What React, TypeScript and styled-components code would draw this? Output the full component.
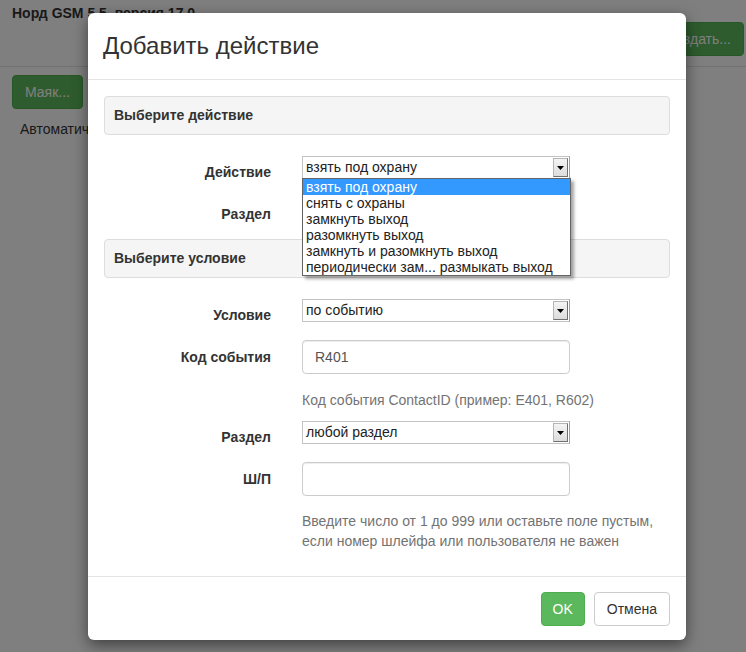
import React from "react";
import styled, { createGlobalStyle } from "styled-components";

const Global = createGlobalStyle`
  html, body {
    margin: 0;
    padding: 0;
    background: #fff;
    font-family: "Liberation Sans", Arial, sans-serif;
    font-size: 14px;
    color: #333;
  }
`;

const Page = styled.div`
  position: relative;
  width: 746px;
  height: 652px;
  overflow: hidden;
`;

const TopBar = styled.div`
  display: flex;
  justify-content: space-between;
  align-items: flex-start;
  padding: 3px 2px 0 12px;
  height: 63px;
  border-bottom: 1px solid #e5e5e5;
`;

const AppTitle = styled.div`
  font-weight: bold;
  font-size: 14px;
  line-height: 20px;
`;

const GreenBtn = styled.div`
  background: #5cb85c;
  border: 1px solid #4cae4c;
  color: #fff;
  border-radius: 4px;
  padding: 6px 12px;
  line-height: 20px;
  font-size: 14px;
`;

const RightBtn = styled(GreenBtn)`
  margin-top: 19px;
  white-space: nowrap;
`;

const PageBody = styled.div`
  padding: 8px 12px;
`;

const BeaconBtn = styled(GreenBtn)`
  display: inline-block;
`;

const AutoText = styled.div`
  padding: 10px 8px 0;
  line-height: 20px;
`;

const Backdrop = styled.div`
  position: absolute;
  inset: 0;
  background: rgba(0, 0, 0, 0.5);
`;

const Modal = styled.div`
  position: absolute;
  top: 13px;
  left: 88px;
  width: 598px;
  background: #fff;
  border-radius: 6px;
  box-shadow: 0 5px 15px rgba(0, 0, 0, 0.5);
`;

const Header = styled.div`
  height: 66px;
  display: flex;
  align-items: center;
  padding: 0 15px;
  border-bottom: 1px solid #e5e5e5;
`;

const Title = styled.h4`
  margin: 0;
  font-size: 24px;
  font-weight: normal;
  line-height: 26px;
  color: #333;
`;

const Body = styled.div`
  padding: 16px 16px 15px;
`;

const Panel = styled.div`
  background: #f5f5f5;
  border: 1px solid #ddd;
  border-radius: 4px;
  padding: 9px 9px 10px;
  font-weight: bold;
  line-height: 18px;
  margin-bottom: 20px;
`;

const Row = styled.div<{ $mb?: number }>`
  display: grid;
  grid-template-columns: 167px 268px;
  column-gap: 31px;
  align-items: start;
  margin-bottom: ${(p) => (p.$mb ?? 15)}px;
`;

const Label = styled.div`
  text-align: right;
  font-weight: bold;
  padding-top: 7px;
  line-height: 20px;
`;

const Spacer = styled.div``;

const SelectBox = styled.div`
  position: relative;
  height: 21px;
  margin-top: 1px;
  border: 1px solid #c3c3c3;
  border-right-color: #a0a0a0;
  display: flex;
  align-items: center;
  background: #fff;
`;

const SelectText = styled.span`
  flex: 1;
  padding-left: 3px;
  line-height: 19px;
  color: #222;
`;

const ArrowBtn = styled.span`
  width: 13px;
  height: 17px;
  margin-right: 1px;
  background: linear-gradient(#f4f4f4, #dcdcdc);
  border: 1px solid #b5b5b5;
  border-right-color: #707070;
  border-bottom-color: #707070;
  display: flex;
  align-items: center;
  justify-content: center;
`;

const DropList = styled.div`
  position: absolute;
  top: 21px;
  left: -1px;
  width: 267px;
  background: #fff;
  border: 1px solid #646464;
  box-shadow: 3px 3px 3px rgba(0, 0, 0, 0.35);
  z-index: 2;
`;

const Option = styled.div<{ $active?: boolean }>`
  height: 16px;
  line-height: 16px;
  padding-left: 3px;
  white-space: nowrap;
  background: ${(p) => (p.$active ? "#3399ff" : "#fff")};
  color: ${(p) => (p.$active ? "#fff" : "#222")};
`;

const Input = styled.div`
  height: 34px;
  box-sizing: border-box;
  border: 1px solid #ccc;
  border-radius: 4px;
  padding: 6px 12px;
  line-height: 20px;
  color: #555;
  box-shadow: inset 0 1px 1px rgba(0, 0, 0, 0.075);
`;

const Help = styled.div<{ $wide?: boolean }>`
  color: #737373;
  line-height: 20px;
  width: ${(p) => (p.$wide ? "380px" : "auto")};
  white-space: ${(p) => (p.$wide ? "normal" : "nowrap")};
  padding-top: ${(p) => (p.$wide ? 0 : 1)}px;
`;

const Footer = styled.div`
  border-top: 1px solid #e5e5e5;
  padding: 15px 16px 14px;
  display: flex;
  justify-content: flex-end;
  gap: 9px;
`;

const OkBtn = styled(GreenBtn)`
  padding: 6px 11px;
`;

const CancelBtn = styled.div`
  background: #fff;
  border: 1px solid #ccc;
  border-radius: 4px;
  padding: 6px 12px;
  line-height: 20px;
  color: #333;
`;

const Arrow = () => (
  <svg width="7" height="4" viewBox="0 0 7 4">
    <path d="M0 0h7L3.5 4z" fill="#000" />
  </svg>
);

const actions = [
  "взять под охрану",
  "снять с охраны",
  "замкнуть выход",
  "разомкнуть выход",
  "замкнуть и разомкнуть выход",
  "периодически зам... размыкать выход",
];

function Select({ value, open }: { value: string; open?: boolean }) {
  return (
    <SelectBox>
      <SelectText>{value}</SelectText>
      <ArrowBtn>
        <Arrow />
      </ArrowBtn>
      {open && (
        <DropList>
          {actions.map((a, i) => (
            <Option key={a} $active={i === 0}>
              {a}
            </Option>
          ))}
        </DropList>
      )}
    </SelectBox>
  );
}

export default function App() {
  return (
    <Page>
      <Global />
      <TopBar>
        <AppTitle>Норд GSM 5.5, версия 17.0</AppTitle>
        <RightBtn>Создать...</RightBtn>
      </TopBar>
      <PageBody>
        <BeaconBtn>Маяк...</BeaconBtn>
        <AutoText>Автоматические действия</AutoText>
      </PageBody>
      <Backdrop />
      <Modal>
        <Header>
          <Title>Добавить действие</Title>
        </Header>
        <Body>
          <Panel>Выберите действие</Panel>
          <Row>
            <Label>Действие</Label>
            <Select value="взять под охрану" open />
          </Row>
          <Row $mb={15}>
            <Label>Раздел</Label>
            <Select value="любой раздел" />
          </Row>
          <Panel>Выберите условие</Panel>
          <Row>
            <Label>Условие</Label>
            <Select value="по событию" />
          </Row>
          <Row>
            <Label>Код события</Label>
            <Input>R401</Input>
          </Row>
          <Row $mb={10}>
            <Spacer />
            <Help>Код события ContactID (пример: E401, R602)</Help>
          </Row>
          <Row>
            <Label>Раздел</Label>
            <Select value="любой раздел" />
          </Row>
          <Row>
            <Label>Ш/П</Label>
            <Input />
          </Row>
          <Row $mb={10}>
            <Spacer />
            <Help $wide>
              Введите число от 1 до 999 или оставьте поле пустым, если номер шлейфа или пользователя не важен
            </Help>
          </Row>
        </Body>
        <Footer>
          <OkBtn>OK</OkBtn>
          <CancelBtn>Отмена</CancelBtn>
        </Footer>
      </Modal>
    </Page>
  );
}
